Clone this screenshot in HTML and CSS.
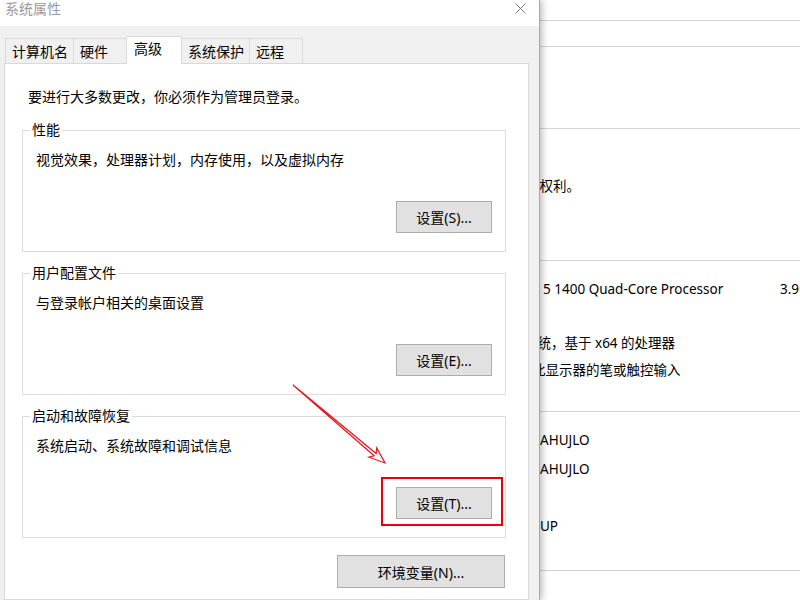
FILE: index.html
```html
<html lang="zh-CN">

<head>
    <meta charset="utf-8" />
    <title>系统属性</title>

    <link rel="stylesheet" href="styles.css">
</head>

<body>
<div class="desktop">

    <!-- fenêtre "Système" derrière la boîte de dialogue -->
    <div class="backdrop">
        <div class="bg-spacer"></div>
        <div class="bg-window">
            <div class="bg-row row-a"></div>
            <div class="bg-row row-b"></div>
            <div class="bg-row row-c"></div>
            <div class="bg-row row-d">
                <div class="bg-line l-rights">的权利。</div>
            </div>
            <div class="bg-row row-e">
                <div class="bg-line l-cpu"><span class="cpu-name">5 1400 Quad-Core Processor</span><span>3.9</span></div>
                <div class="bg-line l-type">系统，基于 x64 的处理器</div>
                <div class="bg-line l-pen">此显示器的笔或触控输入</div>
            </div>
            <div class="bg-row row-f">
                <div class="bg-line l-name">AHUJLO</div>
                <div class="bg-line l-full">AHUJLO</div>
                <div class="bg-line l-group">UP</div>
            </div>
        </div>
    </div>

    <div class="dialog">
        <div class="titlebar">
            <span class="title">系统属性</span>
            <svg class="close" width="11" height="11" viewBox="0 0 11 11">
                <path d="M0.5 0.5 L10.5 10.5 M10.5 0.5 L0.5 10.5" stroke="#7a7a7a" stroke-width="1" fill="none"/>
            </svg>
        </div>

        <div class="tabs">
            <div class="tab">计算机名</div>
            <div class="tab">硬件</div>
            <div class="tab active">高级</div>
            <div class="tab">系统保护</div>
            <div class="tab">远程</div>
        </div>

        <div class="panel">
            <p class="intro">要进行大多数更改，你必须作为管理员登录。</p>

            <fieldset class="group">
                <legend>性能</legend>
                <p class="desc">视觉效果，处理器计划，内存使用，以及虚拟内存</p>
                <div class="actions"><button class="btn">设置(S)...</button></div>
            </fieldset>

            <fieldset class="group">
                <legend>用户配置文件</legend>
                <p class="desc">与登录帐户相关的桌面设置</p>
                <div class="actions"><button class="btn">设置(E)...</button></div>
            </fieldset>

            <fieldset class="group last">
                <legend>启动和故障恢复</legend>
                <p class="desc">系统启动、系统故障和调试信息</p>
                <div class="actions"><button class="btn">设置(T)...</button></div>
            </fieldset>

            <div class="env-row"><button class="btn env">环境变量(N)...</button></div>
        </div>
    </div>

    <!-- annotations rouges -->
    <svg class="annot" width="800" height="600" viewBox="0 0 800 600">
        <polygon points="293,385 376.1,453.5 376.7,448 385,463 368.9,457.2 374.1,455.8"
                 fill="none" stroke="#e8141c" stroke-width="1.2" stroke-linejoin="miter"/>
    </svg>
    <div class="highlight"></div>

</div>
</body>
</html>
```

FILE: styles.css
```css
* {
    box-sizing: border-box;
}

body {
    margin: 0;
    width: 800px;
    height: 600px;
    overflow: hidden;
    background: white;
    font-family: "Noto Sans", "Noto Sans CJK SC", sans-serif;
    font-size: 14px;
    color: #000;
}

div.desktop {
    position: relative;
    width: 800px;
    height: 600px;
    overflow: hidden;
}

/* ---------- fenêtre de fond ---------- */

div.backdrop {
    display: flex;
    height: 600px;
}

div.bg-spacer {
    width: 540px;
    flex: none;
}

div.bg-window {
    flex: 1;
    display: flex;
    flex-direction: column;
    font-family: "Noto Sans", "Noto Sans CJK SC", sans-serif;
    font-size: 13px;
}

div.bg-row {
    border-bottom: 1px solid #d4d4d4;
}

div.row-a { height: 21px; }
div.row-b { height: 26px; }
div.row-c { height: 82px; }
div.row-d { height: 132px; padding-top: 47px; }
div.row-e { height: 151px; padding-top: 18px; }
div.row-f { height: 159px; padding-top: 18px; }

div.bg-line {
    line-height: 20px;
    white-space: nowrap;
    font-size: 13.5px;
}

div.l-rights { margin-left: -14px; }
div.l-cpu { margin-left: 3px; display: flex; }
div.l-type { margin-left: -16px; margin-top: 34px; }
div.l-pen { margin-left: -8px; margin-top: 7px; }
div.l-full { margin-top: 9px; }
div.l-group { margin-top: 37px; }

span.cpu-name {
    width: 237px;
    flex: none;
}

/* ---------- boîte de dialogue ---------- */

div.dialog {
    position: absolute;
    left: 0;
    top: 0;
    width: 540px;
    height: 600px;
    background: #f0f0f0;
    border-right: 1px solid #a8a8a8;
    box-shadow: 2px 0 7px rgba(0, 0, 0, 0.28);
    display: flex;
    flex-direction: column;
    z-index: 2;
}

div.titlebar {
    height: 26px;
    flex: none;
    background: white;
    display: flex;
    justify-content: space-between;
    align-items: flex-start;
    padding: 0 13px 0 5px;
    line-height: 18px;
}

span.title {
    color: #9a9a9a;
}

svg.close {
    margin-top: 3px;
}

div.tabs {
    display: flex;
    align-items: flex-end;
    height: 27px;
    margin: 10px 0 0 5px;
    flex: none;
}

div.tab {
    min-width: 54px;
    height: 25px;
    padding: 3px 5px 0 6px;
    line-height: 20px;
    border: 1px solid #d9d9d9;
    border-bottom: none;
    margin-left: -1px;
    background: #f0f0f0;
}

div.tab:first-child {
    margin-left: 0;
}

div.tab.active {
    position: relative;
    z-index: 1;
    min-width: 56px;
    height: 28px;
    margin-bottom: -1px;
    padding-top: 2px;
    padding-left: 7px;
    background: white;
}

div.panel {
    flex: 1;
    width: 525px;
    margin-left: 4px;
    background: white;
    border: 1px solid #d9d9d9;
    padding: 23px 0 0 17px;
}

p.intro {
    margin: 0 0 0 6px;
    line-height: 20px;
}

fieldset.group {
    width: 484px;
    margin: 14px 0 0 0;
    padding: 0 13px 18px 13px;
    border: 1px solid #dcdcdc;
    display: flex;
    flex-direction: column;
}

fieldset.group + fieldset.group {
    margin-top: 12px;
}

fieldset.group.last {
    margin-top: 11px;
}

fieldset.group legend {
    margin-left: -6px;
    padding: 0 2px;
    line-height: 18px;
}

p.desc {
    margin: 11px 0 0 0;
    line-height: 20px;
}

div.actions {
    display: flex;
    justify-content: flex-end;
    margin-top: 31px;
}

button.btn {
    width: 96px;
    height: 32px;
    padding: 0;
    border: 1px solid #adadad;
    background: #e1e1e1;
    font-family: "Noto Sans", "Noto Sans CJK SC", sans-serif;
    font-size: 14px;
    color: #000;
}

div.env-row {
    display: flex;
    justify-content: flex-end;
    width: 484px;
    margin-top: 17px;
}

button.btn.env {
    width: 168px;
    height: 33px;
    margin-right: 1px;
}

/* ---------- annotations ---------- */

svg.annot {
    position: absolute;
    left: 0;
    top: 0;
    z-index: 3;
    pointer-events: none;
}

div.highlight {
    position: absolute;
    left: 381px;
    top: 477px;
    width: 122px;
    height: 49px;
    border: 2px solid #e8000f;
    z-index: 3;
}
```
